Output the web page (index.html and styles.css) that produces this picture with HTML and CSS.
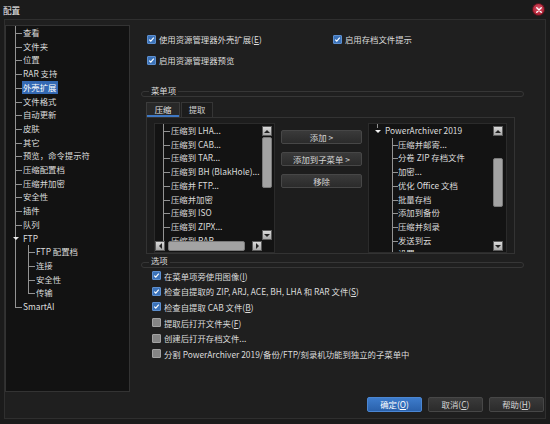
FILE: index.html
```html
<!DOCTYPE html>
<html lang="zh-CN">
<head>
<meta charset="utf-8">
<title>配置</title>
<link rel="stylesheet" href="styles.css">
</head>
<body>
<div class="window">
  <div class="titlebar">
    <span class="title">配置</span>
    <span class="close"><svg viewBox="0 0 8 8" width="6" height="6"><path d="M1 1L7 7M7 1L1 7" stroke="#fff" stroke-width="1.8" stroke-linecap="round"/></svg></span>
  </div>
  <div class="frame">
    <div class="main">
      <div class="navtree">
        <ul class="tree">
          <li>查看</li>
          <li>文件夹</li>
          <li>位置</li>
          <li>RAR 支持</li>
          <li><span class="sel">外壳扩展</span></li>
          <li>文件格式</li>
          <li>自动更新</li>
          <li>皮肤</li>
          <li>其它</li>
          <li>预览，命令提示符</li>
          <li>压缩配置档</li>
          <li>压缩并加密</li>
          <li>安全性</li>
          <li>插件</li>
          <li>队列</li>
          <li class="open"><span class="twisty"></span>FTP
            <ul class="tree sub">
              <li>FTP 配置档</li>
              <li>连接</li>
              <li>安全性</li>
              <li>传输</li>
            </ul>
          </li>
          <li>SmartAI</li>
        </ul>
      </div>
      <div class="content">
        <div class="topchecks">
          <label class="cb"><span class="box on"><svg viewBox="0 0 9 9"><path d="M1.6 4.6L3.6 6.6L7.4 2.2" stroke="#fff" stroke-width="1.5" fill="none"/></svg></span><span>使用资源管理器外壳扩展(<span class="ak">E</span>)</span></label>
          <label class="cb"><span class="box on"><svg viewBox="0 0 9 9"><path d="M1.6 4.6L3.6 6.6L7.4 2.2" stroke="#fff" stroke-width="1.5" fill="none"/></svg></span><span>启用存档文件提示</span></label>
          <label class="cb"><span class="box on"><svg viewBox="0 0 9 9"><path d="M1.6 4.6L3.6 6.6L7.4 2.2" stroke="#fff" stroke-width="1.5" fill="none"/></svg></span><span>启用资源管理器预览</span></label>
        </div>

        <div class="group-head g-menu">
          <span class="group-line"></span>
          <span class="group-label">菜单项</span>
        </div>

        <div class="tabs">
          <span class="tab active">压缩</span>
          <span class="tab">提取</span>
        </div>
        <div class="tabpanel">
          <div class="listbox lb-left">
            <div class="lb-items">
              <ul class="tree ltree">
                <li>压缩到 LHA...</li>
                <li>压缩到 CAB...</li>
                <li>压缩到 TAR...</li>
                <li>压缩到 BH (BlakHole)...</li>
                <li>压缩并 FTP...</li>
                <li>压缩并加密</li>
                <li>压缩到 ISO</li>
                <li>压缩到 ZIPX...</li>
                <li>压缩到 RAR...</li>
                <li>压缩到 7Z...</li>
              </ul>
            </div>
            <div class="vscroll">
              <span class="arrow"><span class="tri up"></span></span>
              <span class="track"><span class="thumb v-left"></span></span>
              <span class="arrow"><span class="tri down"></span></span>
            </div>
            <div class="hscroll">
              <span class="arrow"><span class="tri left"></span></span>
              <span class="htrack"><span class="hthumb"></span></span>
              <span class="arrow"><span class="tri right"></span></span>
            </div>
            <div class="corner"></div>
          </div>

          <div class="btncol">
            <span class="btn">添加 &gt;</span>
            <span class="btn">添加到子菜单 &gt;</span>
            <span class="btn">移除</span>
          </div>

          <div class="listbox lb-right">
            <div class="lb-items">
              <ul class="rtree">
                <li class="root"><span class="twisty"></span>PowerArchiver 2019
                  <ul class="tree rsub">
                    <li>压缩并邮寄...</li>
                    <li>分卷 ZIP 存档文件</li>
                    <li>加密...</li>
                    <li>优化 Office 文档</li>
                    <li>批量存档</li>
                    <li>添加到备份</li>
                    <li>压缩并刻录</li>
                    <li>发送到云</li>
                    <li>设置</li>
                  </ul>
                </li>
              </ul>
            </div>
            <div class="vscroll">
              <span class="arrow"><span class="tri up"></span></span>
              <span class="track"><span class="thumb v-right"></span></span>
              <span class="arrow"><span class="tri down"></span></span>
            </div>
          </div>
        </div>

        <div class="group-head g-opts">
          <span class="group-line"></span>
          <span class="group-label">选项</span>
        </div>

        <div class="options">
          <label class="cb"><span class="box on"><svg viewBox="0 0 9 9"><path d="M1.6 4.6L3.6 6.6L7.4 2.2" stroke="#fff" stroke-width="1.5" fill="none"/></svg></span><span>在菜单项旁使用图像(<span class="ak">I</span>)</span></label>
          <label class="cb"><span class="box on"><svg viewBox="0 0 9 9"><path d="M1.6 4.6L3.6 6.6L7.4 2.2" stroke="#fff" stroke-width="1.5" fill="none"/></svg></span><span>检查自提取的 ZIP, ARJ, ACE, BH, LHA 和 RAR 文件(<span class="ak">S</span>)</span></label>
          <label class="cb"><span class="box on"><svg viewBox="0 0 9 9"><path d="M1.6 4.6L3.6 6.6L7.4 2.2" stroke="#fff" stroke-width="1.5" fill="none"/></svg></span><span>检查自提取 CAB 文件(<span class="ak">B</span>)</span></label>
          <label class="cb"><span class="box off"></span><span>提取后打开文件夹(<span class="ak">F</span>)</span></label>
          <label class="cb"><span class="box off"></span><span>创建后打开存档文件...</span></label>
          <label class="cb"><span class="box off"></span><span>分割 PowerArchiver 2019/备份/FTP/刻录机功能到独立的子菜单中</span></label>
        </div>
      </div>
    </div>
    <div class="footer">
      <span class="btn fbtn primary">确定(<span class="ak">O</span>)</span>
      <span class="btn fbtn">取消(<span class="ak">C</span>)</span>
      <span class="btn fbtn">帮助(<span class="ak">H</span>)</span>
    </div>
  </div>
</div>
</body>
</html>
```

FILE: styles.css
```css
* { box-sizing: border-box; }
html, body { margin: 0; padding: 0; }
body {
  width: 550px;
  height: 424px;
  overflow: hidden;
  background: #1a1a1a;
  font-family: "Noto Sans CJK SC", "Noto Sans", sans-serif;
  font-size: 8.4px;
  color: #dcdcdc;
  text-autospace: no-autospace;
  text-spacing-trim: space-all;
}
.ak { text-decoration: underline; text-underline-offset: 1px; }

.window {
  width: 550px;
  height: 424px;
  display: flex;
  flex-direction: column;
  background: #1b1b1b;
}

/* title bar */
.titlebar {
  height: 19px;
  flex: none;
  display: flex;
  align-items: center;
  justify-content: space-between;
  padding: 0 5px 0 3px;
}
.title { font-size: 8.6px; line-height: 12px; color: #f2f2f2; }
.close {
  width: 13px;
  height: 13px;
  border-radius: 50%;
  background: radial-gradient(circle at 50% 40%, #d9566a 0%, #b8293d 60%, #8e1c2b 100%);
  border: 1px solid #5e151e;
  display: flex;
  align-items: center;
  justify-content: center;
}
.close svg { display: block; }

/* frame */
.frame {
  margin: 0 4px;
  height: 400px;
  flex: none;
  border: 1px solid #2f2f2f;
  background: #1f1f1f;
  display: flex;
  flex-direction: column;
  padding-top: 5px;
}
.main { display: flex; height: 367px; flex: none; }

/* navigation tree */
.navtree {
  width: 125px;
  height: 367px;
  flex: none;
  background: #121212;
  border: 1px solid #333;
  padding: 0 0 0 9px;
}
.tree { list-style: none; margin: 0; padding: 0; }
.tree li {
  position: relative;
  padding-left: 8px;
  line-height: 13.7px;
  white-space: nowrap;
}
.tree li::before {
  content: "";
  position: absolute;
  left: 0;
  top: 0;
  width: 6px;
  height: 7px;
  border-left: 1px solid #939393;
  border-bottom: 1px solid #939393;
}
.tree li:not(:last-child)::after {
  content: "";
  position: absolute;
  left: 0;
  top: 7px;
  bottom: 0;
  border-left: 1px solid #939393;
}
.tree li.open::before { border-bottom: none; }
.tree .sub { padding-left: 5px; }
.twisty {
  position: absolute;
  left: -2px;
  top: 5px;
  width: 0;
  height: 0;
  border-left: 3px solid transparent;
  border-right: 3px solid transparent;
  border-top: 3px solid #f0f0f0;
  z-index: 1;
}
.sel {
  display: inline-block;
  background: #3469b3;
  color: #fff;
  line-height: 13px;
  padding: 0 1px;
  margin-left: -1px;
}

/* content */
.content {
  flex: 1;
  min-width: 0;
  padding: 0 21px 0 11px;
  display: flex;
  flex-direction: column;
}
.cb {
  display: flex;
  align-items: center;
  gap: 3px;
  white-space: nowrap;
}
.box {
  width: 9px;
  height: 9px;
  flex: none;
  border-radius: 1px;
  display: flex;
}
.box svg { width: 100%; height: 100%; display: block; }
.box.on { background: #3b72b8; border: 1px solid #5d8fcf; }
.box.off { background: #858585; border: 1px solid #a2a2a2; }

.topchecks {
  margin: 8px 0 0 6px;
  display: grid;
  grid-template-columns: 186px auto;
  row-gap: 9px;
  line-height: 12px;
}

/* group headers: label laid over a rounded rule, like a legend */
.group-head {
  display: grid;
  grid-template-columns: 1fr;
  grid-template-rows: 1fr;
}
.group-line,
.group-label { grid-area: 1 / 1; }
.group-line {
  align-self: end;
  height: 6px;
  border: 1px solid #363636;
  border-radius: 3px;
}
.group-label {
  align-self: start;
  justify-self: start;
  margin-left: 8px;
  padding: 0 2px;
  line-height: 10px;
  background: #1f1f1f;
  color: #dcdcdc;
}
.g-menu { margin-top: 19px; height: 12px; }
.g-opts { margin-top: 1px; height: 13px; }

/* tabs */
.tabs { display: flex; gap: 1px; margin: 5px 0 0 5px; height: 15px; }
.tab {
  height: 15px;
  line-height: 13px;
  padding: 0;
  text-align: center;
  border: 1px solid #353535;
  border-bottom: none;
  background: #1c1c1c;
  color: #cfcfcf;
}
.tab:first-child { width: 34px; }
.tab:last-child { width: 32px; }
.tab.active {
  background: #282828;
  border-color: #3c3c3c;
  box-shadow: inset 0 -2px 0 #3f78c4;
  color: #e6e6e6;
}

.tabpanel {
  margin-left: 5px;
  width: 369px;
  height: 137px;
  border: 1px solid #333;
  background: #1d1d1d;
  display: flex;
  align-items: flex-start;
  padding: 5px 0 0 7px;
}

/* list boxes */
.listbox {
  height: 130px;
  border: 1px solid #2b2b2b;
  background: #131313;
  display: grid;
  flex: none;
  overflow: hidden;
}
.lb-left { width: 121px; grid-template-columns: 1fr 12px; grid-template-rows: 1fr 11px; }
.lb-right { width: 139px; margin-left: 6px; grid-template-columns: 1fr 13px; grid-template-rows: 1fr; }
.lb-items { overflow: hidden; min-width: 0; min-height: 0; }
.ltree { padding-left: 8px; }

.rtree { list-style: none; margin: 0; padding: 0 0 0 16px; }
.rtree .root { position: relative; line-height: 13.7px; white-space: nowrap; }
.rtree .root::before {
  content: "";
  position: absolute;
  left: -8px;
  top: 0;
  height: 4px;
  border-left: 1px solid #939393;
}
.rtree .root > .twisty { left: -10px; top: 6px; }
.rsub { padding-left: 7px; }
.rsub li { padding-left: 6px; }
.rsub li::before { width: 5px; }

.vscroll {
  display: flex;
  flex-direction: column;
  gap: 1px;
  min-height: 0;
}
.lb-left .vscroll { padding: 2px 1px 1px 0; }
.lb-right .vscroll { padding: 2px 3px 1px 0; }
.arrow {
  width: 10px;
  height: 10px;
  flex: none;
  background: linear-gradient(#dadada, #a9a9a9);
  border: 1px solid #5c5c5c;
  display: flex;
  align-items: center;
  justify-content: center;
}
.tri { width: 0; height: 0; }
.tri.up { border-left: 3px solid transparent; border-right: 3px solid transparent; border-bottom: 3px solid #222; }
.tri.down { border-left: 3px solid transparent; border-right: 3px solid transparent; border-top: 3px solid #222; }
.tri.left { border-top: 3px solid transparent; border-bottom: 3px solid transparent; border-right: 3px solid #222; }
.tri.right { border-top: 3px solid transparent; border-bottom: 3px solid transparent; border-left: 3px solid #222; }
.track { flex: 1; display: flex; flex-direction: column; min-height: 0; }
.thumb {
  display: block;
  width: 10px;
  background: #a3a3a3;
  border: 1px solid #7a7a7a;
  border-radius: 2px;
}
.v-left { height: 51px; }
.v-right { height: 49px; margin-top: 21px; }

.hscroll {
  display: flex;
  gap: 3px;
  align-items: flex-start;
  min-width: 0;
}
.htrack { flex: 1; display: flex; }
.hthumb {
  display: block;
  width: 77px;
  height: 10px;
  background: #a3a3a3;
  border: 1px solid #7a7a7a;
  border-radius: 2px;
}
.corner { background: #131313; }

/* buttons */
.btncol {
  width: 81px;
  margin-left: 6px;
  padding-top: 7px;
  display: flex;
  flex-direction: column;
  gap: 8px;
  flex: none;
}
.btn {
  display: block;
  height: 14px;
  line-height: 12px;
  text-align: center;
  border: 1px solid #474747;
  border-radius: 2px;
  background: linear-gradient(#3a3a3a, #2b2b2b);
  color: #d6d6d6;
  white-space: nowrap;
}

/* options */
.options { margin: 0 0 0 11px; display: flex; flex-direction: column; }
.options .cb { height: 15.6px; gap: 3px; }

/* footer */
.footer {
  display: flex;
  justify-content: flex-end;
  gap: 6px;
  margin-top: 5px;
  padding-right: 1px;
}
.fbtn { width: 55px; height: 15px; line-height: 13px; }
.fbtn.primary {
  background: linear-gradient(#3d7ccc, #2a61ab);
  border-color: #4b86d2;
  color: #fff;
}
```
